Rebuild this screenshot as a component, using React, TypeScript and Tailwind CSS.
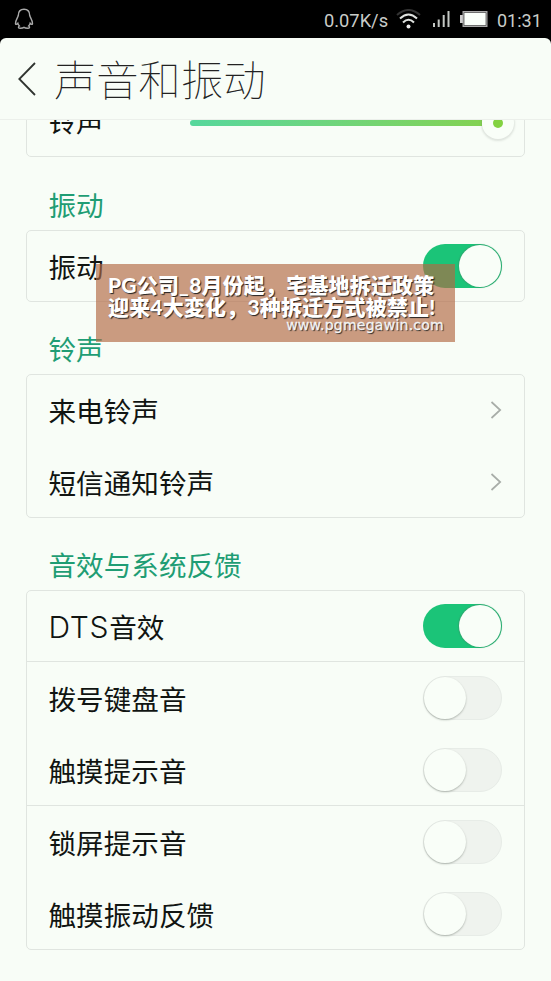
import React from "react";

function Toggle({ on = false }: { on?: boolean }) {
  return on ? (
    <div className="flex h-11 w-[79px] shrink-0 items-center justify-end rounded-full bg-[#1bc478] pr-px">
      <div className="size-[42px] rounded-full bg-[#f9fef8] shadow-[0_0_1px_1px_rgba(70,130,100,0.4)]" />
    </div>
  ) : (
    <div className="flex h-11 w-[79px] shrink-0 items-center rounded-full border border-[#e7ece7] bg-[#eff3ee]">
      <div className="size-[42px] rounded-full bg-[#f9fef8] shadow-[0_1px_2px_rgba(80,90,80,0.4)]" />
    </div>
  );
}

function Chevron() {
  return (
    <svg className="h-[18px] w-3 shrink-0" viewBox="0 0 12 18" fill="none" stroke="#a8ada8" strokeWidth="1.7">
      <path d="M1.5 1 L10.2 9 L1.5 17" />
    </svg>
  );
}

function Row({ label, latin, height = "h-[72px]", children }: { label: string; latin?: string; height?: string; children: React.ReactNode }) {
  return (
    <div className={`flex ${height} items-center justify-between pr-[22px] pl-[21.5px]`}>
      <span className="text-[27.6px] leading-10 whitespace-nowrap text-[#111512]">
        {latin && <span className="font-['Inter',sans-serif] text-[30px] font-light tracking-[0.7px]">{latin}</span>}
        {label}
      </span>
      {children}
    </div>
  );
}

function SectionTitle({ height = "h-[72px]", children }: { height?: string; children: string }) {
  return <h2 className={`flex ${height} items-center pt-[20px] pl-[48.5px] text-[27.6px] leading-10 font-normal text-[#1f9d74]`}>{children}</h2>;
}

function Card({ className = "", children }: { className?: string; children: React.ReactNode }) {
  return <section className={`mr-[26px] ml-[26px] rounded-[5px] border border-[#e0e5e0] ${className}`}>{children}</section>;
}

function StatusBar() {
  return (
    <div className="flex h-[38px] items-center justify-between bg-black pr-[10px] pl-[14px] font-['Roboto',sans-serif] text-[18.5px] text-[#c9ccc9]">
      <svg className="h-[22px] w-5" viewBox="0 0 20 22" fill="none" stroke="#aaa" strokeWidth="1.4">
        <path d="M10 1.2 C6 1.2 4.3 4 4.3 7.4 C4 9.5 1.5 12 1.5 15.4 C1.6 17 2.6 16.4 3.8 15.2 C4 16.5 4.8 17.4 5.4 18 C4 18.8 4 20.3 6.4 20.3 C8 20.3 9 20.2 10 19.4 C11 20.2 12 20.3 13.6 20.3 C16 20.3 16 18.8 14.6 18 C15.2 17.4 16 16.5 16.2 15.2 C17.4 16.4 18.4 17 18.5 15.4 C18.5 12 16 9.5 15.7 7.4 C15.7 4 14 1.2 10 1.2Z" />
      </svg>
      <div className="flex items-center">
        <span className="mr-[8px] w-16 pt-[3px] text-[18.3px] whitespace-nowrap">0.07K/s</span>
        <svg className="mr-3 h-5 w-[25px]" viewBox="0 0 25 20" fill="none" strokeWidth="2">
          <path d="M1 6 Q12.5 -4 24 6" stroke="#333" />
          <path d="M4 9.5 Q12.5 1.5 21 9.5 M7 13.5 Q12.5 8 18 13.5" stroke="#dfe2df" />
          <circle cx="12.5" cy="17.5" r="2" fill="#eee" />
        </svg>
        <svg className="mr-2.5 h-[18px] w-[17px]" viewBox="0 0 17 18">
          <path d="M0 13h2v4H0z M4.7 9.5h2V17h-2z M9.7 5h2v12h-2z M14.5 1h2v16h-2z" fill="#c4c7c4" />
        </svg>
        <svg className="mr-[9px] h-[18px] w-[28px]" viewBox="0 0 28 18">
          <path d="M0 5h3v8H0z" fill="#ccc" />
          <path d="M2.5 1h25v16h-25z" fill="#aaa" />
          <path d="M4 2.5h22v13h-22z" fill="#fafffa" stroke="#555" strokeWidth=".8" />
        </svg>
        <span className="w-[44px] pt-0.5 text-[18px] whitespace-nowrap">01:31</span>
      </div>
    </div>
  );
}

export default function App() {
  return (
    <div className="relative h-[981px] w-[551px] overflow-hidden bg-[#f8fdf7] font-['Noto_Sans_CJK_SC',sans-serif]">
      <div className="bg-black">
        <StatusBar />
        <header className="flex h-[82px] items-center rounded-t-[6px] border-b border-[#ecf0eb] bg-[#f8fdf7] pl-[18px]">
          <svg className="mr-[18px] h-[34px] w-[18px]" viewBox="0 0 18 34" fill="none" stroke="#303430" strokeWidth="1.8">
            <path d="M17 1 L1.3 17 L17 33" />
          </svg>
          <h1 className="pb-[2px] text-[42.3px] leading-[60px] font-thin text-[#222]">声音和振动</h1>
        </header>
      </div>
      <main>
        <div className="flex h-[37px] items-end overflow-hidden">
          <Card className="w-[499px] shrink-0">
            <Row label="铃声">
              <div className="-mr-[12px] flex w-[324px] items-center pt-[6px]">
                <div className="h-[6px] flex-1 rounded-l-full bg-linear-to-r from-[#56d79c] to-[#83d252]" />
                <div className="flex size-8 items-center justify-center rounded-full bg-[#f9fef8] shadow-[0_1px_2px_1px_rgba(80,90,80,0.15)]">
                  <div className="size-[10px] rounded-full bg-[#83d241]" />
                </div>
              </div>
            </Row>
          </Card>
        </div>
        <SectionTitle height="h-[73px]">振动</SectionTitle>
        <Card className="h-[72px]">
          <Row label="振动" height="h-[70px]"><Toggle on /></Row>
        </Card>
        <SectionTitle>铃声</SectionTitle>
        <Card className="h-[144px]">
          <div className="-mt-px">
            <Row label="来电铃声"><Chevron /></Row>
            <Row label="短信通知铃声"><Chevron /></Row>
          </div>
        </Card>
        <SectionTitle>音效与系统反馈</SectionTitle>
        <Card className="h-[360px]">
          <Row latin="DTS" label="音效" height="h-[70px]"><Toggle on /></Row>
          <div className="border-t border-[#e0e5e0]">
            <Row label="拨号键盘音"><Toggle /></Row>
            <Row label="触摸提示音"><Toggle /></Row>
          </div>
          <div className="-mt-px border-t border-[#e0e5e0]">
            <Row label="锁屏提示音"><Toggle /></Row>
            <Row label="触摸振动反馈"><Toggle /></Row>
          </div>
        </Card>
      </main>
      <div className="absolute top-[264px] left-[96px] h-[78px] w-[359px] bg-[rgba(177,104,67,0.66)] pt-[10px] pl-[12px] font-['Lato','Noto_Sans_CJK_SC',sans-serif] text-[21px] leading-[21.5px] font-black tracking-[0.18px] whitespace-nowrap text-white [text-shadow:1px_1px_1px_#222]">
        <div>PG公司_8月份起，宅基地拆迁政策</div>
        <div>迎来4大変化，3种拆迁方式被禁止!</div>
        <div className="pr-[11px] text-right font-['DejaVu_Sans',sans-serif] text-[14px] leading-4 font-normal tracking-[0.25px] text-[#f4f4f4] [-webkit-text-stroke:0.3px_#f4f4f4]">www.pgmegawin.com</div>
      </div>
    </div>
  );
}
